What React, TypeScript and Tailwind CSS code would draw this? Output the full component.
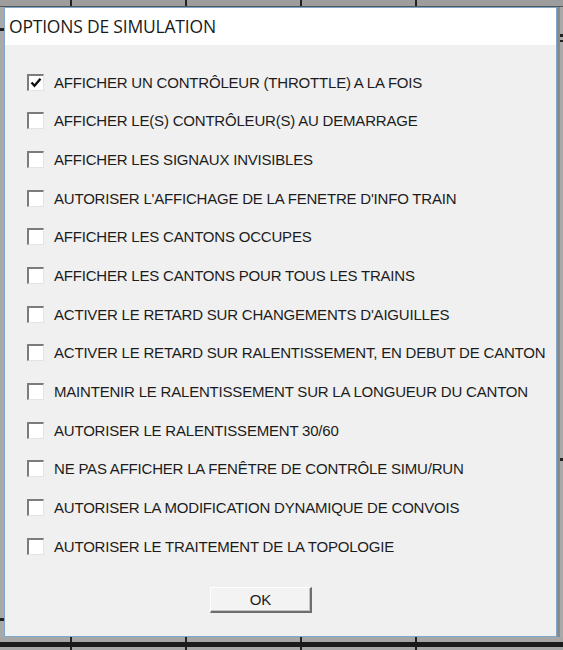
import React from "react";

const options: { label: string; checked: boolean }[] = [
  { label: "AFFICHER UN CONTRÔLEUR (THROTTLE) A LA FOIS", checked: true },
  { label: "AFFICHER LE(S) CONTRÔLEUR(S) AU DEMARRAGE", checked: false },
  { label: "AFFICHER LES SIGNAUX INVISIBLES", checked: false },
  { label: "AUTORISER L'AFFICHAGE DE LA FENETRE D'INFO TRAIN", checked: false },
  { label: "AFFICHER LES CANTONS OCCUPES", checked: false },
  { label: "AFFICHER LES CANTONS POUR TOUS LES TRAINS", checked: false },
  { label: "ACTIVER LE RETARD SUR CHANGEMENTS D'AIGUILLES", checked: false },
  { label: "ACTIVER LE RETARD SUR RALENTISSEMENT, EN DEBUT DE CANTON", checked: false },
  { label: "MAINTENIR LE RALENTISSEMENT SUR LA LONGUEUR DU CANTON", checked: false },
  { label: "AUTORISER LE RALENTISSEMENT 30/60", checked: false },
  { label: "NE PAS AFFICHER LA FENÊTRE DE CONTRÔLE SIMU/RUN", checked: false },
  { label: "AUTORISER LA MODIFICATION DYNAMIQUE DE CONVOIS", checked: false },
  { label: "AUTORISER LE TRAITEMENT DE LA TOPOLOGIE", checked: false },
];

function Box({ checked }: { checked: boolean }) {
  return (
    <div className="w-[17px] h-[17px] shrink-0 bg-white border-t-2 border-l-2 border-t-[#7c7c7c] border-l-[#7c7c7c] border-b border-r border-b-[#e3e3e3] border-r-[#e3e3e3] flex items-center justify-center">
      {checked && (
        <svg width="12" height="11" viewBox="0 0 12 11">
          <path d="M1.5 5.5 L4.5 8.8 L10.5 1.8" fill="none" stroke="#111" strokeWidth="2.4" />
        </svg>
      )}
    </div>
  );
}

function TickRow({ h, dark }: { h: string; dark: boolean }) {
  return (
    <div className={`flex flex-row gap-[113px] pl-[70px] w-[563px] shrink-0 ${h} ${dark ? "bg-[#9d9d9d]" : "bg-[#a6a6a6]"}`}>
      {[0, 1, 2, 3].map((i) => (
        <div key={i} className="w-[2px] h-full bg-[#222]" />
      ))}
    </div>
  );
}

export default function App() {
  return (
    <div className="w-[563px] h-[650px] bg-[#a9a9a9] overflow-hidden flex flex-col">
      {/* top strip of the desktop behind */}
      <div className="flex flex-col shrink-0">
        <TickRow h="h-[6px]" dark />
        <div className="h-[1px] bg-[#555]" />
      </div>

      <div className="flex flex-row h-[630px] shrink-0">
        {/* left desktop edge */}
        <div className="w-[4px] flex flex-col pt-[21px] gap-[587px] bg-[#a9a9a9]">
          <div className="h-[3px] bg-[#222]" />
          <div className="h-[3px] bg-[#222]" />
        </div>

        {/* dialog */}
        <div className="w-[553px] h-[630px] border border-[#7fa7cc] bg-[#f0f0f0] flex flex-col">
          <div className="h-[37px] bg-white flex items-center pl-[4px] shrink-0">
            <span className="text-[17.5px] text-[#1a1a1a] font-['Open_Sans',sans-serif] tracking-[-0.2px]">
              OPTIONS DE SIMULATION
            </span>
          </div>
          <div className="flex flex-col pt-[18px] pl-[22px] font-['Liberation_Sans',Arial,sans-serif]">
            {options.map((o) => (
              <div key={o.label} className="h-[38.67px] flex items-center gap-[10px]">
                <Box checked={o.checked} />
                <span className="text-[15px] text-[#1c1c1c] leading-none whitespace-nowrap tracking-[-0.2px]">{o.label}</span>
              </div>
            ))}
            <div className="mt-[21px] ml-[183px] w-[102px] h-[26px] bg-[#f3f3f3] border-t border-l border-t-white border-l-white border-b-2 border-r-2 border-b-[#6e6e6e] border-r-[#6e6e6e] shadow-[inset_-1px_-1px_0_#c4c4c4] flex items-center justify-center">
              <span className="text-[15px] text-[#1c1c1c] leading-none">OK</span>
            </div>
          </div>
        </div>

        {/* right desktop edge */}
        <div className="flex-1 flex flex-row">
          <div className="w-[3px] bg-[#8a8a8a]" />
          <div className="flex-1 flex flex-col pt-[27px] bg-[#a9a9a9]">
            <div className="h-[3px] bg-[#222]" />
            <div className="h-[3px]" />
            <div className="h-[2px] bg-[#222]" />
            <div className="h-[416px]" />
            <div className="h-[3px] bg-[#222]" />
          </div>
        </div>
      </div>

      {/* bottom strip of the desktop behind */}
      <div className="flex flex-col shrink-0">
        <TickRow h="h-[5px]" dark={false} />
        <div className="h-[5px] bg-[#1a1a1a]" />
        <TickRow h="h-[3px]" dark={false} />
      </div>
    </div>
  );
}
